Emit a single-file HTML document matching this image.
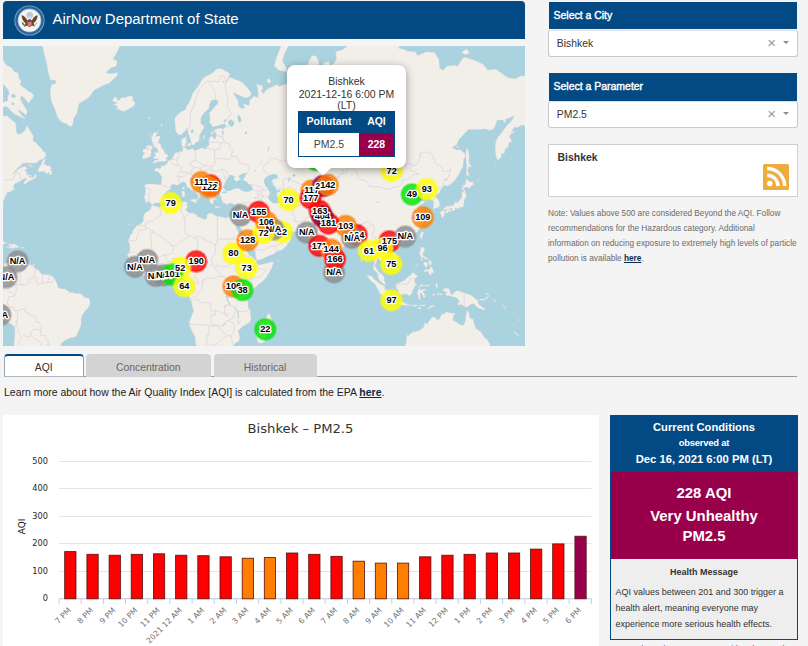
<!DOCTYPE html>
<html lang="en">
<head>
<meta charset="utf-8">
<title>AirNow Department of State</title>
<style>
*{box-sizing:border-box;margin:0;padding:0}
html,body{width:808px;height:646px;overflow:hidden;background:#f4f4f4;font-family:"Liberation Sans",Arial,sans-serif;color:#333}
.abs{position:absolute}
#hdr{left:3px;top:1px;width:522px;height:38px;background:#034a84;border-radius:4px 4px 0 0}
#hdr .t{position:absolute;left:49.5px;top:8px;font-size:14.96px;color:#fff;white-space:nowrap;line-height:20px}
#map{left:3px;top:46px;width:522px;height:300px;background:#aad3df;overflow:hidden}
.ml{font:bold 9.2px "Liberation Sans",Arial,sans-serif;text-anchor:middle;fill:#000;stroke:#fff;stroke-width:2.7px;paint-order:stroke;stroke-linejoin:round}
.bar{left:548.5px;width:248.5px;height:27.5px;background:#034a84;color:#fff;font-size:10.47px;font-weight:normal;-webkit-text-stroke:.4px #fff;line-height:27px;padding-left:5px;white-space:nowrap}
.sel{left:548.3px;width:249.4px;height:26.6px;background:#fff;border:1px solid #c9c9c9;border-top-color:#dcdcdc;border-radius:3px;font-size:10.4px;line-height:26px;padding-left:7.5px;color:#333;white-space:nowrap}
.sel .x{position:absolute;right:20.8px;top:-1.2px;font-size:15px;color:#9a9a9a}
.sel .a{position:absolute;right:8.2px;top:10px;width:0;height:0;border-left:3.4px solid transparent;border-right:3.4px solid transparent;border-top:3.4px solid #8a8a8a}
#info{left:548px;top:143.5px;width:249.5px;height:53.5px;background:#fff;border:1px solid #cfcfcf}
#info b{position:absolute;left:8.5px;top:6.5px;font-size:10.47px;line-height:13px;color:#333}
#note{left:548px;top:205.5px;width:258px;font-size:8.24px;line-height:15px;color:#6a6a6a;white-space:nowrap}
#note b,#learn b{color:#0a2a4a;text-decoration:underline}
.tab{top:354px;height:22.5px;border-radius:4px 4px 0 0;font-size:10.4px;line-height:28px;text-align:center;color:#666;background:#d3d3d3;white-space:nowrap}
#learn{left:4px;top:386px;font-size:10.47px;line-height:14px;color:#222;white-space:nowrap}
#chart{left:3px;top:415px;width:596px;height:231px;background:#fff}
.yl{font:8.2px "DejaVu Sans","Liberation Sans",sans-serif;text-anchor:end;fill:#262626}
.xl{font:7.8px "DejaVu Sans","Liberation Sans",sans-serif;text-anchor:end;fill:#727272}
#cc{left:610px;top:415px;width:188px;height:224.5px;border:1px solid #034a84;background:#eee}
#cc .h{position:absolute;left:0;top:0;width:186px;height:56px;background:#034a84;color:#fff;text-align:center;font-weight:bold}
#cc .v{position:absolute;left:0;top:56px;width:186px;height:86.5px;background:#99004c;color:#fff;text-align:center;font-weight:bold;font-size:14.9px}
#cc .ln{position:absolute;left:0;width:186px;white-space:nowrap}
</style>
</head>
<body>
<div id="hdr" class="abs">
<svg class="abs" style="left:11.1px;top:3.7px" width="31" height="31" viewBox="0 0 31 31">
<circle cx="15.5" cy="15.5" r="15.1" fill="#7fa9b3"/>
<circle cx="15.5" cy="15.5" r="14.2" fill="#2f63a0"/>
<circle cx="15.5" cy="15.5" r="11.9" fill="#7ea3c4"/>
<circle cx="15.5" cy="15.5" r="11.2" fill="#f4f4f2"/>
<circle cx="15.7" cy="10.2" r="3.3" fill="#b9c9d8"/>
<path d="M7.6 10.300c1.700.200 3.200 1.300 4.200 2.800l1.600 2.300 2.200-2 2.200 2 1.600-2.300c1-1.500 2.500-2.600 4.200-2.800-.1 3.400-1.500 6.300-4 7.800l1.200 3.400-2.700-.9-2.500 1.700-2.500-1.700-2.700.9 1.200-3.400c-2.500-1.500-3.900-4.400-4-7.800Z" fill="#6b4423"/>
<path d="M13.600 15.400h4v3.700c0 1.400-1 2.300-2 2.700-1-.4-2-1.300-2-2.700Z" fill="#e07a7a"/>
<path d="M13.600 15.400h4v1.500h-4Z" fill="#2d4f86"/>
<path d="M14.500 12.600l1.100-1.600 1.100 1.600-.6 1.600h-1Z" fill="#efe6d8"/>
<path d="M8.300 17.500c.6 1.700 1.700 2.900 3.300 3.600" stroke="#4f7a3a" stroke-width="1.500" fill="none"/>
<path d="M22.700 17.500c-.5 1.500-1.500 2.700-3 3.500" stroke="#9a8f7a" stroke-width="1" fill="none"/>
</svg>
<div class="t">AirNow Department of State</div>
</div>

<div id="map" class="abs">
<svg class="abs" style="left:0;top:0" width="522" height="300" viewBox="0 0 522 300">
<path d="M148.6 159.5L149.9 159.3L154.8 160.8L156.9 161.3L159.1 159.8L161.4 159.0L164.0 157.7L167.6 156.9L171.8 156.9L175.0 156.3L177.8 156.6L180.4 155.8L182.1 155.5L183.1 156.6L184.6 156.3L184.2 157.9L183.5 159.5L184.6 161.1L182.9 163.4L182.7 164.4L184.8 165.5L185.7 166.5L187.8 167.2L189.3 167.0L192.1 168.0L193.8 168.5L194.2 170.5L196.3 171.3L198.4 172.0L201.2 173.5L202.9 173.2L203.8 171.8L203.8 169.3L205.0 167.7L207.4 167.0L210.1 167.7L210.6 168.8L212.3 169.3L214.4 170.3L217.6 170.5L219.7 171.3L222.9 172.3L224.8 171.3L227.2 170.5L229.3 170.8L229.9 171.3L230.4 174.2L230.6 175.5L231.8 178.6L233.1 180.8L234.4 183.9L235.7 186.7L236.7 188.8L237.2 190.9L239.7 193.2L240.4 195.5L240.4 198.7L240.8 200.7L243.1 202.2L244.6 206.7L245.3 207.6L246.3 208.9L248.4 210.0L250.6 212.2L252.3 213.7L253.3 214.6L253.1 216.3L253.8 217.0L254.8 218.7L257.0 218.7L260.2 218.1L263.3 217.2L265.5 217.0L268.7 215.7L270.4 215.9L269.9 218.7L269.3 220.9L267.6 224.1L265.9 227.3L263.3 231.6L260.2 234.8L257.6 236.9L254.8 239.1L251.6 242.1L249.5 244.8L248.2 246.1L246.7 246.9L245.7 249.7L244.6 251.4L243.8 254.4L244.8 255.7L245.3 258.3L244.8 260.2L245.9 262.6L247.2 263.7L247.6 266.9L247.4 269.1L248.0 272.4L247.8 274.6L246.3 276.4L244.2 277.9L241.0 279.7L239.7 280.2L237.8 282.4L235.5 284.2L235.0 285.8L236.3 288.1L236.7 290.4L236.7 293.4L235.7 295.2L232.5 296.9L231.0 298.3L231.2 300.9L230.6 304.5L227.2 308.2L225.0 311.4L220.8 315.7L216.5 318.2L208.0 318.7L203.8 320.3L200.6 319.0L200.1 314.4L199.1 310.6L196.3 304.8L193.5 300.9L192.1 293.8L192.1 290.8L189.9 286.9L186.7 280.2L186.3 276.8L187.2 273.5L188.9 269.1L190.6 264.8L189.3 260.4L188.4 256.1L187.4 254.0L186.3 250.8L184.6 248.7L182.5 246.5L180.8 244.4L179.9 242.7L181.0 240.6L181.4 239.1L182.1 236.9L182.1 234.8L181.8 232.7L180.1 231.6L179.3 231.4L176.1 231.8L174.0 232.0L171.8 229.5L170.8 227.8L168.4 227.6L165.5 227.8L163.3 228.4L161.2 229.3L159.1 230.1L156.9 231.0L154.8 230.3L152.7 230.1L149.5 230.3L145.2 231.8L142.0 230.5L138.2 227.8L136.7 226.5L134.6 225.2L133.1 223.0L132.9 222.0L132.0 220.9L130.3 218.7L129.3 217.6L127.2 215.9L125.7 214.6L125.4 212.6L125.0 210.2L124.0 209.6L125.0 208.5L126.1 206.7L126.9 203.4L127.2 202.0L126.7 199.3L126.1 199.1L126.3 196.6L124.9 195.9L125.0 194.3L126.5 192.0L127.2 189.3L129.3 186.9L129.7 185.1L130.6 183.4L132.5 181.5L133.7 179.3L136.7 178.4L139.5 176.2L140.6 174.2L140.3 172.7L140.3 170.5L141.4 168.0L143.1 166.0L145.0 165.2L146.7 164.2L147.8 162.1ZM266.1 266.9L268.0 271.3L268.7 274.6L267.2 275.7L267.0 277.9L266.3 280.2L265.0 284.7L263.3 290.4L261.6 295.7L259.1 296.9L257.0 297.3L254.8 296.2L253.8 292.7L253.3 289.2L255.3 285.8L255.7 283.5L254.8 281.3L254.8 277.9L256.5 276.1L259.1 275.3L261.2 273.5L263.3 271.3L264.4 269.1ZM149.3 159.0L147.8 157.7L146.5 155.8L145.5 155.8L144.2 156.3L142.0 156.3L142.5 153.7L141.0 151.5L142.0 148.2L142.7 145.4L142.3 142.5L141.4 139.7L143.5 137.9L146.3 137.9L149.5 137.9L153.1 138.2L156.9 138.8L158.0 137.9L158.6 134.6L158.9 131.9L158.6 130.1L156.9 128.2L156.5 127.0L155.2 126.0L152.0 125.1L151.2 123.2L153.8 121.9L156.9 122.5L158.0 122.2L157.8 119.3L158.6 119.9L161.6 119.6L163.3 118.3L164.6 117.0L164.6 115.0L166.5 114.3L168.0 113.6L168.9 112.9L169.7 111.2L171.0 109.5L171.4 107.7L172.9 106.6L176.1 106.3L176.5 105.6L178.2 105.2L179.3 105.6L179.9 104.5L179.7 103.0L179.5 100.8L178.6 98.6L178.4 94.8L178.6 92.9L181.4 92.1L183.5 90.1L183.5 92.9L182.9 94.8L184.4 95.6L182.9 97.5L182.1 99.7L181.4 101.2L182.5 102.3L184.6 102.7L184.2 104.1L186.7 103.4L189.9 102.3L191.4 104.5L195.2 103.4L199.5 101.2L200.8 102.7L202.7 102.7L203.8 100.8L205.9 99.4L205.9 96.7L205.9 93.6L207.0 90.9L209.3 90.1L210.6 92.1L212.3 92.9L213.1 89.7L213.3 87.3L211.2 86.1L211.2 84.0L214.0 82.7L216.5 82.3L220.8 82.7L222.9 80.6L225.5 81.1L222.9 79.3L221.8 78.1L218.7 78.5L214.4 79.8L210.1 81.1L208.4 78.9L206.7 76.3L207.0 71.8L206.3 67.2L209.1 63.9L212.3 60.0L215.0 57.5L215.0 55.0L212.7 53.4L208.4 54.5L206.5 58.5L205.9 62.5L201.6 66.3L199.1 69.6L198.0 71.8L197.8 76.3L197.8 77.6L200.6 79.8L201.2 82.3L199.7 83.6L198.4 86.1L196.7 88.9L196.3 92.9L195.2 95.9L192.7 96.3L191.6 98.6L188.9 99.0L188.2 96.7L187.8 94.8L186.7 90.9L185.0 86.9L185.0 84.8L184.0 83.6L183.8 81.1L182.9 84.8L181.4 85.6L179.3 88.1L177.2 88.9L175.0 88.5L173.1 85.6L172.3 82.7L172.3 78.9L171.8 76.3L171.8 71.8L174.0 69.6L176.1 67.2L179.3 64.9L182.5 63.4L183.5 60.0L185.7 57.5L187.8 52.4L189.9 47.1L192.1 44.3L194.2 41.5L196.3 38.6L198.4 34.5L201.6 30.8L205.9 29.0L210.1 26.5L213.3 23.2L216.1 22.6L219.7 23.2L221.8 24.5L225.0 26.5L227.2 27.7L225.0 30.8L228.2 31.5L231.4 33.3L235.7 34.5L239.9 36.9L244.2 41.5L248.4 47.1L247.4 50.3L243.1 51.9L237.8 50.3L233.6 48.1L230.4 46.5L232.5 50.8L235.3 55.0L235.3 60.0L238.9 62.5L241.6 61.5L239.9 57.5L243.1 58.5L246.3 59.5L246.3 55.0L250.6 50.3L254.8 51.3L255.3 47.1L254.4 41.5L253.3 38.0L259.1 39.8L260.2 42.6L258.0 44.3L260.2 47.6L263.3 43.7L267.6 41.5L274.0 38.6L276.1 40.4L282.5 38.0L286.8 35.7L289.9 30.8L291.0 35.7L297.4 34.5L301.6 35.7L303.8 36.9L307.0 39.8L308.0 36.3L304.8 32.1L303.4 26.5L303.8 19.9L307.0 13.0L309.1 9.4L313.4 10.2L316.1 16.5L315.5 23.2L316.1 29.6L315.5 35.7L317.6 41.5L316.5 47.1L314.4 50.8L317.6 48.1L319.7 42.6L318.7 35.7L317.6 29.6L318.7 23.2L320.8 16.5L326.1 15.1L327.2 19.9L331.4 16.5L333.6 13.0L332.5 5.8L340.0 3.5L346.3 -2.0L346.3 -6.8L352.7 -11.0L361.2 -15.4L369.7 -17.2L374.0 -19.0L383.2 -30.4L386.8 -27.5L388.9 -21.8L397.4 -20.8L402.7 -14.5L401.7 -6.0L395.3 2.0L401.7 3.5L403.8 5.0L412.3 5.8L414.4 9.4L424.0 5.8L431.5 6.5L435.7 13.0L436.8 21.9L440.0 24.5L444.2 19.9L450.6 19.2L454.9 19.9L459.1 13.0L461.2 10.9L471.9 14.4L480.4 18.6L484.7 23.9L493.2 23.2L501.7 29.6L505.9 32.1L512.3 32.7L518.7 29.6L523.4 30.2L524.0 35.7L527.2 29.6L533.6 30.8L544.2 35.7L544.2 57.5L542.3 70.5L537.9 69.6L532.5 72.8L528.3 76.3L524.0 80.6L518.7 78.9L514.4 81.5L511.3 81.1L509.1 84.8L508.1 88.9L505.9 89.7L508.1 93.6L508.7 95.9L505.9 96.7L505.5 100.5L501.7 104.1L501.7 107.0L498.5 107.7L498.1 111.2L494.7 114.6L493.2 111.2L492.1 104.1L492.5 96.7L494.9 90.9L498.5 86.9L501.3 82.7L504.9 78.5L509.1 74.1L511.3 69.6L507.0 71.8L502.7 73.2L502.3 77.2L499.6 74.1L494.2 74.1L491.0 82.7L486.8 84.4L482.1 82.7L477.2 83.6L470.8 83.6L465.5 83.6L460.2 88.9L455.9 93.6L453.8 98.6L449.1 101.6L453.8 104.1L457.0 103.4L459.8 105.9L461.9 107.0L462.1 110.5L460.8 112.9L460.2 118.0L459.8 121.2L457.0 126.0L455.3 129.2L452.3 133.7L449.5 136.7L444.6 140.2L442.1 139.1L440.0 140.8L439.3 141.7L437.4 144.0L437.2 145.9L434.6 148.2L432.7 148.7L432.5 150.4L434.6 152.8L436.6 156.3L436.8 159.0L436.1 161.1L433.6 161.9L430.4 163.2L430.2 160.3L430.6 157.7L430.6 155.0L428.3 154.2L427.2 153.7L427.8 150.9L426.8 149.0L425.7 148.2L422.9 149.3L420.0 151.2L419.3 149.6L420.8 146.5L418.7 145.9L415.7 148.5L412.3 150.4L411.7 151.5L413.4 153.7L414.4 155.5L416.6 155.0L418.3 154.2L419.8 155.0L422.1 155.5L421.7 156.6L418.0 158.5L417.2 159.0L415.1 161.6L415.5 162.4L417.2 164.2L418.5 167.2L420.4 169.8L420.4 172.0L418.3 173.2L419.8 174.2L420.8 174.7L420.0 177.2L418.7 179.1L416.6 182.0L415.7 183.9L414.4 185.8L412.7 187.4L410.2 189.7L409.5 190.2L405.9 191.6L404.2 192.5L402.7 192.7L400.6 193.6L397.4 194.3L396.1 195.0L396.3 197.1L394.9 196.6L394.6 194.3L392.1 193.9L391.0 194.3L388.9 195.5L387.8 197.3L386.3 200.0L387.4 202.2L388.9 204.5L390.6 206.0L391.4 206.5L393.2 208.9L393.6 212.2L393.8 214.4L393.2 216.6L391.0 218.1L388.9 218.9L388.3 220.2L386.3 222.0L384.6 222.8L384.2 220.9L384.6 219.8L383.6 218.9L381.7 218.7L380.4 216.6L379.3 215.0L377.2 214.2L375.9 214.0L375.9 212.4L374.0 212.6L373.9 214.4L373.6 215.9L372.9 217.6L372.3 218.7L372.5 221.3L374.0 223.0L375.3 225.8L377.2 226.7L378.7 228.0L380.6 229.9L381.2 232.7L381.4 235.2L382.5 236.9L383.2 238.2L381.4 238.4L379.3 236.9L377.0 235.0L375.5 232.7L374.9 229.9L374.6 227.6L372.9 225.6L371.0 224.1L370.4 224.1L370.4 222.0L370.8 219.8L370.8 217.6L371.2 215.5L370.2 212.2L370.0 210.9L369.1 207.8L368.9 205.6L367.6 204.5L365.9 205.6L364.0 207.1L361.9 206.7L362.3 203.4L361.9 201.1L360.8 198.9L359.1 197.5L357.6 195.5L357.0 194.6L356.6 192.5L354.8 191.8L353.8 193.2L351.7 193.6L349.5 194.1L348.5 193.6L346.8 194.6L346.1 195.9L345.3 197.7L343.8 198.2L342.1 199.3L340.2 201.6L338.5 202.9L336.3 205.1L334.0 206.7L332.1 207.8L331.7 210.0L332.1 213.1L331.2 215.5L331.1 218.1L330.0 219.2L329.3 221.3L327.6 222.4L326.1 223.9L324.8 223.0L323.6 220.0L322.5 217.1L320.5 213.5L318.9 209.3L318.2 207.8L317.2 204.5L316.2 200.0L315.9 197.7L316.1 195.0L315.5 192.7L314.6 194.8L312.3 196.2L310.2 195.5L308.0 192.5L310.2 191.8L308.0 191.1L307.0 189.7L304.8 188.8L303.8 186.7L302.9 185.5L298.5 185.8L293.8 186.0L292.1 186.0L290.2 185.5L286.8 185.3L284.2 184.6L282.5 182.0L281.0 181.3L278.2 182.4L276.1 182.4L273.1 180.3L270.8 179.3L269.3 176.9L268.0 174.2L265.5 173.2L264.6 174.2L263.3 175.5L264.4 177.9L265.0 179.8L266.7 181.5L268.0 182.9L268.2 184.8L269.3 186.7L269.7 186.2L269.7 183.9L270.4 183.6L271.0 185.5L270.8 187.2L271.0 188.1L272.9 188.1L275.0 188.3L277.0 187.4L278.9 185.5L280.4 183.9L281.2 183.2L281.2 186.2L282.1 187.9L284.6 189.3L285.9 189.5L288.5 192.0L286.8 195.5L285.7 196.8L284.2 197.7L284.0 200.0L282.5 200.5L281.0 202.5L278.2 204.5L276.3 204.5L274.0 205.4L272.3 206.7L269.7 208.5L265.7 210.0L263.3 211.1L260.2 212.4L257.0 213.7L254.6 214.2L253.6 214.0L253.1 212.6L252.5 209.3L252.1 206.7L251.6 204.7L249.5 201.8L248.4 199.8L246.3 197.1L244.6 194.3L244.0 192.0L242.1 188.3L240.4 186.2L238.9 183.9L236.7 180.3L235.7 178.9L234.8 178.9L235.6 175.5L234.4 179.1L234.1 179.7L232.7 178.4L231.4 176.7L230.6 174.5L230.1 171.3L233.1 171.5L234.4 170.5L235.3 169.0L235.7 167.2L236.7 164.4L237.4 162.6L237.4 160.3L237.8 159.0L238.2 157.4L236.7 157.4L234.8 156.9L232.5 158.7L229.3 157.7L226.5 156.7L226.1 158.2L224.0 158.5L221.4 157.1L219.5 156.3L219.1 154.5L218.0 152.8L218.7 152.3L218.2 150.9L218.0 150.1L217.0 149.6L217.0 148.2L216.5 146.5L216.3 145.8L213.1 145.5L212.3 147.1L213.1 147.8L211.6 148.2L211.0 148.2L209.9 146.5L209.3 148.2L210.1 150.1L210.8 151.2L212.3 153.7L212.3 154.6L211.4 153.8L210.1 153.9L210.6 155.5L210.4 157.7L209.1 157.9L207.4 156.9L206.5 154.5L207.4 152.8L206.1 152.6L205.2 151.2L203.8 149.0L202.5 147.1L202.6 144.5L202.5 142.8L200.6 141.4L199.7 140.7L196.1 138.2L193.5 136.4L192.9 133.7L191.8 132.8L190.8 134.3L190.1 132.2L190.6 131.8L188.9 131.9L187.4 132.5L187.4 134.3L187.4 136.1L188.0 136.6L189.9 137.9L191.4 141.1L193.3 142.8L195.2 142.8L195.0 143.7L197.2 145.1L199.5 146.4L200.6 147.9L200.4 148.7L199.3 147.6L197.8 146.8L196.5 148.2L196.3 149.0L197.6 150.7L196.3 151.8L195.9 153.1L194.6 153.8L194.5 153.1L195.2 151.8L195.2 150.1L194.6 148.2L193.1 147.6L192.7 146.5L191.5 145.8L190.4 144.7L188.0 144.1L187.2 143.1L186.3 142.3L184.8 141.4L183.5 139.9L183.1 138.2L182.7 136.7L182.1 136.4L180.1 135.5L178.6 136.7L177.2 137.3L176.1 138.2L174.4 139.4L172.7 138.8L171.2 138.5L169.7 138.2L168.6 138.8L167.8 139.9L167.8 141.4L168.0 142.8L165.9 144.3L163.8 145.1L162.9 146.2L161.2 148.5L160.6 149.7L161.6 151.6L160.1 152.8L159.7 154.7L157.2 156.6L155.9 156.9L153.8 157.1L151.8 157.1L149.9 158.6ZM149.1 117.8L152.3 116.8L153.8 116.6L154.8 115.6L156.9 116.0L158.9 115.5L161.6 115.5L163.3 115.0L164.2 114.1L164.2 113.3L162.3 112.9L163.3 111.9L164.6 110.9L164.9 109.5L164.0 108.1L162.1 107.9L161.8 105.9L161.0 105.6L160.8 103.8L158.6 101.9L158.0 100.5L157.8 98.2L156.9 97.5L155.9 96.7L154.4 96.7L155.5 95.6L155.9 94.4L156.7 92.3L157.4 90.9L156.9 90.1L154.2 90.1L152.5 90.9L152.9 89.3L154.6 87.3L154.7 86.3L150.6 86.5L149.9 88.9L148.9 90.9L149.1 93.2L148.0 94.0L149.5 95.2L149.3 99.4L150.6 97.8L150.8 97.1L151.2 98.6L150.3 100.8L151.8 101.6L153.5 100.8L153.5 102.3L154.4 103.8L155.2 103.8L154.8 105.2L154.6 106.3L154.0 106.6L151.4 106.3L152.0 107.4L151.2 108.4L152.5 108.4L152.7 109.5L151.2 110.9L149.9 111.6L150.3 112.4L152.0 112.6L152.9 112.6L154.4 113.3L155.5 112.6L154.8 113.9L152.3 113.9L151.6 114.6L150.6 116.3ZM147.7 110.5L148.0 107.7L148.2 106.5L148.0 104.1L149.5 102.7L149.3 101.6L148.4 99.7L145.7 99.2L143.5 100.1L142.7 101.6L143.8 102.3L142.9 103.0L139.9 103.0L139.9 105.9L142.0 107.0L141.0 108.1L140.1 109.5L139.1 110.9L139.5 112.2L140.3 113.1L143.1 112.2L146.3 110.9ZM112.9 63.4L114.4 62.0L114.4 60.0L110.1 58.5L114.4 57.0L109.1 55.0L112.3 50.3L115.4 55.0L118.0 51.9L122.3 51.6L126.5 49.8L129.9 50.8L129.7 54.0L132.3 57.0L130.3 60.5L128.9 61.2L125.0 63.4L120.8 65.4L118.0 64.9L116.1 63.2ZM5.9 -35.5L15.4 -15.4L19.7 -13.6L33.5 -13.6L36.7 -10.2L39.9 2.0L42.0 10.9L44.2 19.9L45.2 26.5L47.4 33.9L52.7 34.5L52.7 37.5L48.4 38.6L47.1 47.1L48.4 55.5L51.2 61.5L54.8 71.8L58.6 76.3L63.3 77.6L67.6 81.1L69.7 78.5L70.8 71.8L74.0 67.2L76.1 57.5L81.2 54.5L86.7 50.8L91.0 44.3L99.5 39.8L105.9 37.5L114.4 29.6L114.4 26.5L108.0 27.7L102.7 26.5L108.0 21.9L113.3 19.9L114.4 15.1L110.1 13.0L114.4 5.8L117.6 -2.0L120.8 -10.2L119.7 -14.5L121.8 -21.8L122.9 -55.8L5.9 -55.8ZM-13.3 164.2L-1.6 162.1L0.5 161.1L-0.5 156.6L1.2 153.7L1.4 151.5L1.8 150.9L3.5 148.7L3.7 146.8L8.0 145.4L9.3 144.0L12.2 143.4L11.8 142.4L10.8 142.7L10.3 141.4L10.8 139.4L11.8 137.8L14.4 136.7L16.1 135.8L18.6 134.3L20.8 133.1L23.3 131.9L23.9 132.8L20.5 136.7L21.6 138.5L25.9 134.9L31.4 132.8L33.5 131.0L32.7 127.6L30.3 131.6L27.1 131.3L25.0 130.1L23.1 127.3L23.9 125.1L20.8 124.5L24.4 122.9L24.6 121.9L21.8 120.4L19.3 120.9L17.6 121.7L15.4 123.0L13.3 124.9L11.2 127.6L9.7 128.2L10.5 127.0L11.8 125.7L12.9 124.0L14.4 122.2L16.2 120.6L18.0 120.1L19.0 118.0L19.9 117.3L25.0 117.0L29.7 117.3L33.5 117.0L36.7 113.9L39.7 113.3L42.7 110.5L42.9 107.0L39.9 105.2L39.3 103.4L35.6 99.7L33.5 97.1L29.9 94.6L30.3 89.7L28.2 86.5L25.0 81.1L24.2 79.3L21.8 84.8L18.6 87.3L15.6 88.5L13.1 85.6L13.3 80.6L12.2 76.3L9.0 74.5L4.4 70.0L-0.5 70.0L-5.0 70.0L-13.3 71.8ZM23.9 118.3L27.1 118.6L29.9 120.9L28.2 120.9L25.0 119.0ZM24.2 128.9L25.0 127.6L27.1 129.5L29.3 129.3L28.2 130.7L26.1 130.1ZM35.0 125.7L35.2 122.9L37.8 119.3L39.3 115.6L40.3 113.9L43.1 112.6L42.2 114.6L41.0 117.3L40.3 118.6L42.5 118.0L43.1 119.6L46.3 119.6L47.4 120.6L48.4 122.5L46.7 124.1L48.4 124.1L49.1 125.9L48.2 128.7L47.1 128.7L45.9 128.1L46.3 125.4L44.2 127.6L42.2 127.9L42.7 126.0L42.0 125.7L38.8 125.7ZM-13.3 4.2L-4.8 11.6L-0.5 13.7L3.7 19.2L9.0 21.9L11.2 25.8L15.2 27.1L15.9 32.1L18.2 35.7L16.9 38.6L19.7 40.9L23.3 43.2L25.4 45.4L28.2 46.5L30.8 49.2L29.5 52.4L27.3 54.5L25.9 57.5L23.3 54.5L21.2 51.9L18.0 49.8L17.6 54.0L19.5 57.5L21.6 60.5L23.1 63.0L24.4 65.4L23.7 67.7L23.1 69.6L21.2 67.7L18.2 65.4L15.2 63.7L16.1 65.8L19.0 69.6L21.6 71.8L22.9 73.2L20.8 72.3L17.6 70.9L14.4 69.6L12.2 68.4L9.0 66.3L6.9 63.4L3.7 60.5L-0.5 61.0L-4.8 60.0L-5.8 57.5L-3.3 55.5L-0.1 56.0L2.7 55.5L4.6 55.0L4.8 50.8L6.1 47.6L5.2 43.7L2.7 40.9L0.5 38.6L-2.7 34.5L-6.5 29.6L-13.3 26.5ZM-13.3 223.0L-3.3 222.6L-2.2 224.1L0.3 220.9L0.5 218.9L2.0 217.6L3.3 217.0L5.9 216.6L8.6 214.5L9.5 215.9L8.2 217.6L8.8 218.3L10.1 217.6L11.8 216.6L12.2 215.0L12.7 216.6L15.6 217.6L16.5 218.7L18.8 218.5L20.5 218.5L22.5 219.6L23.5 219.4L24.6 218.7L29.3 218.3L27.6 218.7L28.6 219.8L31.4 220.9L31.8 222.8L33.5 223.0L35.6 224.1L37.4 226.7L39.9 228.4L43.7 228.6L46.3 228.8L49.9 230.8L51.4 232.0L52.7 234.8L53.7 236.9L54.8 239.1L54.8 241.2L58.0 242.7L59.1 242.7L61.2 242.7L64.4 244.4L66.9 246.5L69.7 246.3L72.2 247.4L76.1 247.3L79.3 249.1L81.8 251.4L84.6 252.1L86.1 252.3L86.7 255.1L87.1 256.3L86.9 258.4L85.2 261.9L83.5 263.7L82.4 264.6L81.4 266.5L79.3 269.1L78.2 273.1L78.2 276.8L77.8 279.9L76.7 282.4L75.4 285.3L74.0 289.2L71.8 291.5L69.3 291.5L66.5 292.0L64.6 293.4L62.7 293.8L59.5 296.2L58.0 298.1L57.8 300.7L58.0 302.3L57.4 304.5L50.5 315.7L9.0 315.7L10.1 303.3L11.0 299.2L11.4 292.9L12.0 285.1L11.6 281.0L9.5 279.3L8.0 277.9L3.7 275.7L1.2 274.2L-1.0 270.9L-3.1 266.9L-13.3 258.3ZM2.7 201.4L5.0 201.8L7.3 201.8L8.6 202.9L12.2 201.4L15.6 201.8L15.8 200.9L13.9 199.6L12.2 198.4L10.1 198.0L8.6 198.2L6.5 198.0L5.0 198.2L6.3 199.3L7.1 200.9L4.8 201.0ZM3.5 197.2L1.6 198.0L-4.1 198.1L-3.1 196.4L-5.8 194.3L-13.3 193.2L-13.3 190.9L-2.7 193.6L0.1 195.2L1.6 196.2ZM18.2 202.2L18.2 201.1L21.6 201.4L21.4 202.2ZM29.5 219.7L31.4 219.6L31.6 218.1L29.9 218.3ZM331.1 220.2L333.1 222.0L334.0 222.8L335.4 225.2L335.1 227.3L333.8 228.2L332.5 228.5L331.9 228.3L331.1 226.5L331.0 224.1L331.2 222.0ZM439.8 164.2L441.0 162.6L443.4 160.6L444.9 160.0L446.8 160.2L448.9 159.6L450.0 160.3L450.8 158.5L452.1 156.6L452.2 155.3L453.4 155.0L452.7 156.2L453.2 156.9L455.3 155.8L457.0 153.8L458.1 152.3L458.7 150.9L459.1 149.0L458.8 148.2L459.1 146.5L459.8 144.8L460.8 145.8L461.2 144.1L462.3 144.3L462.3 146.8L463.4 149.3L462.5 152.8L461.2 152.8L461.2 156.3L460.4 158.2L460.9 159.8L460.0 161.2L458.9 161.9L458.7 160.3L458.5 161.2L457.3 161.1L457.2 161.9L456.7 162.6L456.5 161.3L455.5 162.5L452.7 162.6L452.5 161.5L451.9 162.6L452.5 163.4L451.0 164.2L450.2 165.6L448.7 164.4L448.8 163.5L449.3 162.5L447.8 162.3L446.1 162.9L443.2 163.4L441.7 164.2ZM439.8 164.4L441.5 165.2L441.9 166.7L441.0 169.5L440.2 171.1L439.3 171.8L438.3 171.1L438.3 169.3L437.8 167.7L437.4 167.7L437.0 166.2L437.6 165.5L438.7 165.2ZM442.1 165.8L443.8 164.1L446.4 163.3L447.6 163.7L447.8 164.7L446.8 166.1L445.3 165.5L444.2 167.4L443.2 166.7ZM459.1 144.0L458.7 142.0L459.8 140.2L460.2 138.8L461.2 139.1L462.1 138.8L462.6 135.8L463.0 133.7L462.7 132.4L465.3 134.6L467.2 136.1L470.4 135.7L470.2 137.9L471.5 138.6L468.5 139.8L466.1 142.5L463.4 141.1L461.2 141.7L459.8 141.1L460.6 142.3L461.7 143.1L460.6 143.3ZM463.4 103.0L464.9 102.7L465.9 107.7L466.1 109.5L465.9 114.6L466.6 118.0L469.1 121.2L465.5 120.6L464.9 124.5L465.5 127.6L466.6 128.2L466.4 130.7L464.9 128.5L463.4 130.7L463.2 127.6L463.6 124.5L463.4 121.2L463.6 118.0L462.7 112.2L463.0 106.6ZM420.0 185.5L420.6 186.2L420.0 188.6L419.0 191.5L418.4 193.4L417.2 191.8L416.8 189.7L417.8 187.4L418.7 186.1ZM392.5 199.6L394.2 201.8L396.1 200.7L397.4 198.7L396.6 197.5L394.2 198.0ZM417.8 201.1L421.2 201.4L421.7 204.5L420.0 206.9L420.2 210.0L421.9 210.7L423.6 211.3L425.3 214.2L423.6 213.5L422.1 212.4L420.2 211.5L418.7 211.8L417.8 210.4L417.2 209.3L416.2 206.3L417.2 205.6L417.4 203.1ZM428.1 220.2L430.0 223.0L430.6 225.6L429.8 227.8L428.7 226.3L428.1 229.3L425.5 228.0L425.5 225.6L423.8 225.2L421.0 226.5L421.0 224.6L422.7 223.7L423.6 222.8L424.6 223.9L426.6 222.8L427.2 222.0ZM425.7 214.4L427.8 214.4L428.7 217.2L427.6 219.8L426.8 219.6L425.9 217.9L425.9 216.6ZM420.8 215.7L423.4 216.6L425.1 217.2L424.2 219.8L423.6 221.8L422.1 221.1L421.7 218.9L420.6 218.7ZM410.6 223.3L413.6 220.2L415.5 218.1L415.7 216.8L415.1 217.6L412.3 221.3ZM417.2 212.2L419.1 212.4L419.8 214.2L419.1 215.0L418.0 213.5ZM394.4 236.9L395.9 237.6L398.0 235.9L399.5 235.0L401.7 234.4L403.8 231.8L405.9 230.5L407.0 229.5L408.3 228.4L409.8 226.5L410.6 226.5L411.7 228.0L412.5 228.7L414.9 230.1L413.6 231.6L412.1 232.3L411.5 234.2L411.9 236.9L414.2 239.1L412.1 239.5L411.2 241.2L411.2 242.3L409.8 244.0L409.1 246.5L408.5 248.7L405.9 249.7L405.1 249.9L404.9 248.4L401.7 248.0L399.1 248.7L395.7 247.4L395.3 244.4L393.6 242.7L393.2 240.6L393.2 238.6ZM363.8 229.3L368.7 230.1L370.4 232.3L371.2 233.2L373.8 235.0L375.7 236.9L377.2 237.6L379.3 239.1L381.2 240.1L382.1 241.2L381.4 243.3L383.4 243.5L384.4 246.1L386.8 247.6L386.6 250.1L386.3 253.6L385.1 253.6L383.8 253.8L382.3 252.3L378.9 249.5L376.1 246.5L374.7 243.2L373.4 240.8L371.4 237.6L369.1 235.9L365.7 232.5ZM385.1 255.7L386.8 253.8L388.5 254.2L391.7 254.6L392.3 255.6L396.1 256.0L397.2 254.8L398.5 255.4L400.8 255.9L401.0 256.6L402.7 257.6L404.6 257.8L404.6 259.8L401.0 259.1L397.4 258.8L393.2 257.6L390.4 257.6L387.8 257.0ZM404.7 258.5L406.3 258.4L407.4 259.1L406.3 260.0ZM407.8 259.1L408.9 258.7L409.5 259.6L408.9 260.2L407.8 260.0ZM409.8 259.4L411.5 258.5L412.9 258.9L414.6 259.1L414.4 260.0L412.3 260.2L410.0 260.4ZM416.1 259.1L418.7 258.9L422.5 258.5L422.9 259.1L420.8 260.0L417.6 260.0L416.1 260.0ZM414.4 261.5L416.6 261.1L418.3 262.6L416.6 263.2L414.9 262.2ZM424.0 263.2L426.1 260.9L428.3 259.6L431.5 259.0L432.1 259.2L430.4 260.4L427.2 261.9L425.1 263.2ZM426.9 238.0L427.6 237.8L426.1 240.1L425.1 240.5L422.9 240.1L419.8 240.1L417.6 240.1L417.0 241.2L416.8 242.9L418.2 244.2L420.0 243.0L423.8 243.0L422.5 243.8L420.4 245.0L419.5 245.5L421.5 247.6L421.9 249.7L422.5 251.2L420.8 251.4L419.8 249.9L418.7 246.9L417.0 247.6L417.4 249.7L417.4 253.1L415.5 253.1L415.3 252.2L415.7 249.7L414.2 248.7L414.2 246.9L415.5 243.3L416.2 243.1L416.1 240.8L417.2 239.3L418.3 238.4L419.8 238.9L422.7 239.2L425.7 239.1ZM432.5 239.1L433.4 236.7L435.1 238.0L433.6 239.1L435.1 240.1L434.0 240.6L434.4 242.9L433.4 242.1L432.9 240.6ZM433.6 247.8L436.8 247.2L439.5 248.0L439.5 249.3L436.8 248.4L434.0 248.7ZM429.3 248.0L431.5 247.8L431.9 248.9L430.4 249.4L429.3 248.9ZM440.0 242.9L443.2 242.1L446.4 242.9L447.0 245.5L447.4 248.2L449.5 248.4L451.7 245.9L454.4 244.4L457.0 245.5L460.6 246.5L461.9 246.9L466.8 248.8L468.7 249.4L471.5 252.3L474.0 254.0L475.7 254.6L475.8 255.5L474.0 255.6L476.1 258.3L476.8 259.6L478.9 260.4L480.4 261.9L482.3 263.1L481.3 264.1L478.3 263.2L474.3 261.5L471.9 258.7L469.3 257.6L466.6 258.9L465.5 260.6L464.4 260.9L461.2 260.6L458.9 258.5L456.8 259.1L454.9 259.1L454.9 257.0L456.4 255.9L455.1 252.9L452.7 251.6L448.9 250.6L445.7 249.5L443.8 249.9L442.1 247.4L444.9 246.5L442.1 245.9L440.0 244.2ZM476.8 253.1L479.3 252.9L481.5 252.9L483.6 251.6L485.3 250.1L485.1 251.6L483.6 253.1L480.4 254.6L477.2 254.0ZM482.1 246.7L484.7 248.0L486.8 250.8L486.1 250.8L484.2 248.7L482.1 247.4ZM490.2 252.7L492.1 254.2L493.2 255.9L491.9 255.7L490.6 254.0ZM500.4 261.1L502.7 261.3L503.4 262.4L501.3 262.2ZM503.0 259.1L503.8 260.0L504.4 261.7L503.6 261.1ZM498.5 257.4L501.3 259.1L500.8 259.4L498.3 257.8ZM510.2 284.9L513.4 287.2L516.6 289.9L515.5 289.9L512.3 287.8L510.2 285.6ZM515.7 272.8L517.0 273.9L517.0 275.0L515.9 274.6ZM402.1 299.0L403.2 295.9L403.4 291.5L404.0 288.8L405.1 289.9L407.0 288.1L409.5 286.2L413.6 285.3L416.6 284.4L419.8 281.9L421.2 280.2L421.2 277.9L422.7 276.6L424.2 278.8L425.1 276.4L427.2 273.5L429.3 271.3L431.5 271.1L433.8 273.1L433.8 274.2L435.7 273.3L437.0 272.4L437.8 269.8L439.6 267.9L442.1 267.4L443.4 265.4L445.3 266.5L448.5 267.1L452.3 267.4L450.6 269.8L450.4 272.8L449.3 273.5L452.3 275.5L454.9 277.0L458.1 279.3L460.8 279.0L462.3 274.6L462.7 270.2L463.2 268.2L463.6 264.8L464.4 264.1L465.9 266.9L467.2 272.2L470.4 273.5L470.8 276.8L472.5 281.3L473.6 283.0L477.6 285.6L478.7 287.3L480.4 289.9L482.1 292.0L484.4 293.8L485.5 295.9L487.2 298.1L487.0 300.9L487.8 315.7L401.7 315.7ZM283.6 25.8L276.1 24.5L271.2 19.9L272.9 13.0L275.0 7.2L278.2 -0.4L282.5 -10.2L291.0 -14.5L305.9 -23.6L305.9 -17.2L291.0 -8.5L285.7 -0.4L281.4 8.0L279.3 15.1L283.6 21.9ZM264.4 32.7L266.5 32.7L268.0 35.7L265.5 37.5L264.0 35.1ZM286.8 27.1L289.5 29.6L288.9 31.5L286.3 29.6ZM458.7 6.5L463.4 2.7L466.6 7.2L462.3 8.7ZM187.6 153.7L189.7 153.3L194.4 153.0L193.3 155.0L193.8 156.2L193.3 157.3L191.0 156.2L188.0 154.7ZM180.8 144.7L182.1 146.8L181.6 150.4L180.4 150.9L179.1 151.2L179.1 148.2L178.5 146.5L178.6 145.5ZM181.2 139.7L181.5 142.3L180.8 144.3L179.5 142.8L179.5 141.4L181.0 140.5ZM211.2 160.8L212.3 160.3L214.6 160.7L217.2 160.8L217.0 161.6L213.8 161.9L211.2 161.1ZM229.9 161.9L231.2 161.2L232.7 160.7L234.8 159.8L233.3 161.5L233.6 161.7L231.4 162.8L230.1 162.3ZM166.2 149.3L167.8 148.3L168.5 149.0L167.7 150.1ZM210.1 150.9L211.0 150.9L212.7 152.0L213.5 153.7L212.3 152.8L210.8 151.8ZM220.1 158.6L221.2 157.8L221.0 158.7L220.4 159.3ZM216.3 150.4L217.8 150.0L217.6 150.9L216.3 150.8ZM184.8 97.8L188.0 96.5L188.0 98.2L187.2 100.5L185.0 99.7ZM182.1 98.6L184.2 99.0L184.0 100.3L182.5 100.1ZM199.7 91.7L201.2 89.3L202.1 89.1L201.2 91.7L199.9 93.2ZM196.1 95.9L197.6 91.5L197.2 93.6ZM207.6 87.7L209.1 86.3L210.8 86.7L209.9 88.1L208.0 89.1ZM208.2 85.2L209.5 84.6L210.1 85.6L209.1 86.1ZM274.6 214.3L276.1 214.0L277.2 214.3L275.7 214.8ZM145.5 71.4L147.2 70.5L146.9 73.6L145.9 72.8ZM158.0 78.5L159.1 77.6L158.9 81.1L158.0 80.2ZM154.2 84.8L155.5 84.0L155.5 85.6ZM146.3 88.9L148.0 86.9L147.8 88.9L146.1 90.1ZM147.2 91.3L148.0 90.5L148.9 92.1L147.8 92.5ZM125.2 178.4L126.7 177.8L126.1 179.0ZM127.6 179.1L128.4 178.7L128.4 179.6ZM130.8 178.9L131.6 177.4L132.6 176.2L131.6 178.6ZM110.6 208.2L111.4 208.5L111.2 209.1ZM244.6 253.6L245.0 254.0L245.3 254.8L244.7 254.6ZM253.1 265.6L253.8 266.3L253.3 266.7ZM278.9 286.7L279.9 287.2L279.3 287.7ZM283.3 284.7L284.2 285.1L283.6 285.8ZM358.5 212.2L359.1 213.3L358.9 215.5L358.3 216.3L358.3 214.4ZM385.1 244.8L386.8 244.6L388.3 246.7L387.4 247.6L386.1 245.9ZM429.8 166.0L430.6 165.3L431.3 165.7L430.4 166.2ZM436.1 163.4L436.8 162.4L436.5 163.7ZM470.8 137.3L473.0 135.2L472.3 136.1ZM473.8 135.2L477.8 132.2L476.1 134.0ZM491.7 117.6L493.4 115.3L492.7 117.3ZM508.9 86.9L510.8 84.0L511.5 85.6L509.6 87.7ZM453.4 100.5L455.5 99.7L454.9 101.6Z" fill="#f2efe9" stroke="#d9cfd6" stroke-width=".35"/>
<path d="M222.9 144.8L220.8 142.5L220.1 141.1L220.6 139.1L222.1 138.2L222.1 136.1L224.2 133.1L225.5 131.3L226.5 129.2L228.2 128.9L229.3 128.9L230.6 130.4L232.7 130.4L230.4 132.5L232.5 134.9L233.6 135.5L236.5 133.7L238.9 133.4L236.3 132.2L235.7 130.1L237.8 128.5L241.0 127.3L243.1 127.0L244.8 127.0L242.7 128.5L242.1 130.7L241.0 132.5L239.5 133.1L240.6 134.3L241.6 134.6L244.2 136.4L245.7 137.9L248.4 139.7L249.7 142.3L249.7 143.7L246.7 145.4L245.7 145.4L242.9 145.7L239.9 145.0L238.4 144.5L237.8 143.4L235.9 142.5L232.5 142.5L230.1 143.3L228.0 144.5L226.1 145.1ZM218.4 146.9L220.8 147.2L222.9 147.1L224.8 146.1L222.9 145.4L220.8 145.2L219.3 146.2ZM262.3 139.7L260.6 135.2L261.9 132.2L263.3 130.7L266.5 129.2L269.7 127.9L272.9 128.2L274.4 129.2L274.6 132.8L271.9 132.5L269.7 133.7L268.2 134.9L269.5 136.1L270.2 137.9L270.4 139.4L271.9 140.2L273.3 142.5L272.9 143.4L273.8 144.5L276.5 143.1L277.6 145.4L275.0 145.7L273.8 148.2L274.0 150.1L275.9 152.3L275.7 155.5L276.1 156.6L274.0 156.9L271.9 157.4L269.7 157.1L267.6 155.3L265.3 152.6L265.3 150.4L266.3 149.8L266.3 147.6L268.2 147.3L266.7 146.5L265.5 144.5L264.6 142.5ZM8.8 218.3L10.1 219.8L9.7 221.8L8.2 221.5L8.0 219.8ZM228.9 241.8L230.4 240.8L232.5 240.5L233.8 241.0L234.2 242.1L233.6 243.3L233.1 245.5L232.5 246.3L231.2 246.7L229.3 246.7L228.9 245.5L228.7 243.3ZM223.6 248.4L224.6 250.8L224.4 252.3L225.0 254.0L226.3 256.1L227.2 258.3L227.6 259.8L226.3 259.4L225.5 256.8L224.0 254.6L223.3 251.9L223.1 249.7ZM233.6 261.5L234.8 264.8L235.5 268.0L236.1 271.7L235.0 272.0L234.4 268.0L233.8 264.8L233.3 261.7ZM237.8 231.6L238.4 232.7L239.3 235.2L238.4 235.9L237.8 234.2ZM226.1 238.9L228.0 236.5L227.8 237.6L227.0 238.9ZM191.0 212.4L192.3 212.2L192.3 213.7L191.0 213.7ZM381.9 112.6L383.6 113.1L385.7 112.1L387.8 110.2L391.0 107.4L393.2 105.2L394.6 101.2L395.3 97.8L393.8 97.8L392.5 101.6L390.2 105.2L387.4 108.1L385.3 110.9L383.2 111.9ZM317.6 132.8L318.2 130.4L320.4 128.2L322.1 128.9L325.1 128.7L328.2 128.4L329.7 128.9L329.7 129.8L327.2 129.8L324.0 129.8L320.8 130.1L319.3 131.9L318.9 133.7ZM289.3 129.8L290.6 128.2L292.9 128.9L292.1 130.1L290.2 130.7ZM285.0 135.5L285.5 132.8L286.5 131.0L287.4 131.9L286.5 134.0L285.9 136.1ZM323.4 141.4L325.1 140.4L327.8 140.7L326.8 142.0L324.6 142.1ZM227.2 81.1L230.4 79.8L231.2 77.6L231.0 75.4L227.2 73.2L225.0 75.9L225.3 78.1L227.0 79.8ZM236.5 76.7L238.4 75.0L237.8 71.8L235.7 68.6L234.4 70.5L235.0 74.1ZM187.6 85.2L189.3 83.6L191.0 84.4L190.1 86.5L188.4 87.3ZM191.2 89.7L192.3 88.1L192.9 86.1L192.1 87.3ZM218.7 85.2L220.1 84.8L220.6 87.7L219.7 89.3L219.1 87.3ZM257.2 153.1L258.2 153.1L258.9 155.5L257.8 155.8L257.4 154.5ZM251.4 151.8L253.3 151.1L253.8 152.3L252.3 152.7ZM257.0 146.5L258.0 147.2L258.2 147.8L257.4 147.3ZM241.6 86.5L243.3 85.2L244.2 87.7L242.7 88.5ZM381.9 212.6L383.6 214.2L382.9 214.6L381.7 213.3ZM442.1 133.1L443.8 132.8L443.6 134.9L442.3 134.6ZM373.4 156.3L375.3 155.8L375.5 157.1L373.8 157.1ZM372.9 -2.0L380.4 -0.4L386.8 -2.8L380.4 -4.4ZM374.6 112.6L375.5 112.9L375.3 116.3L374.6 116.0ZM357.6 116.3L359.7 116.3L359.5 117.6L357.8 117.6ZM338.5 123.8L341.7 124.5L341.2 125.1L338.9 124.8ZM334.2 129.8L335.7 130.1L335.3 131.0L334.0 130.7ZM257.0 117.3L259.1 114.6L259.5 114.6L257.6 117.6ZM264.4 104.1L266.1 99.7L266.7 99.7L265.5 104.1L265.0 105.9ZM250.8 125.7L253.1 123.5L252.7 125.1ZM231.2 188.6L230.6 190.9L228.2 193.2L229.1 192.7L231.0 190.9ZM218.7 279.9L222.7 276.8L222.5 277.7L219.5 280.2ZM221.8 259.6L223.1 259.6L222.7 261.3L221.8 260.9ZM160.6 224.1L161.6 226.3L161.4 227.6L160.8 226.5L159.3 224.6ZM12.2 274.4L13.7 275.0L14.8 276.6L13.1 275.7ZM219.3 35.1L221.6 35.7L220.4 36.9ZM220.4 75.4L222.5 72.8L223.3 74.1L221.4 76.3ZM9.0 48.1L12.2 48.7L12.5 51.3L10.1 51.9L8.0 50.3ZM8.4 56.5L11.2 57.0L11.0 59.0L8.8 59.0Z" fill="#aad3df"/>
<path d="M156.5 161.3L157.6 165.5L158.6 168.5L153.5 171.8L149.5 174.7L142.7 177.4L142.7 180.8M142.7 179.8L133.1 179.8M142.7 180.8L142.7 183.9L135.7 183.9L135.7 189.7L133.5 190.9L133.3 194.8L125.0 194.8M142.7 180.8L151.0 186.2L163.8 195.2L168.0 198.2L168.2 200.0L170.2 199.7L170.1 205.6L168.6 208.0L163.3 208.9L161.6 208.9M170.2 199.7L173.5 198.9L177.2 195.7L186.7 189.7M186.7 189.7L182.5 187.4L181.2 183.4L182.3 179.1L181.4 173.7L183.1 170.0L185.7 167.7L185.9 166.2M181.4 173.7L180.4 169.0L177.2 164.7L178.9 161.6L179.5 156.6M214.4 170.3L214.4 193.2L214.4 197.7L212.3 197.7L212.3 198.9L195.2 190.0L193.1 190.9L191.4 191.8L186.7 189.7M214.4 193.2L239.7 193.2M151.0 186.2L147.4 186.2L149.5 207.8L141.0 208.0L136.7 207.6L135.2 209.3L132.5 206.3L130.3 205.4L126.1 206.7M168.9 216.1L169.7 212.2L176.1 213.3L181.4 213.7L188.9 212.2L190.1 211.8L194.2 204.7L195.0 196.8L193.1 190.9M212.3 198.9L212.3 207.4L209.1 211.1L208.0 214.2L209.9 217.9L207.4 218.7L201.6 222.0L194.2 225.2L191.0 219.8L193.1 217.6L192.1 213.5L190.1 211.8M191.4 214.6L189.3 219.8L186.7 225.2L183.5 226.3L180.4 229.5L179.3 231.4M209.9 217.9L212.3 222.6L214.4 219.2L220.8 220.9L225.0 219.8L230.4 215.5L231.8 218.7L233.6 220.9L234.2 218.5L235.7 215.5L238.2 213.3L238.9 210.4L239.9 204.5L243.1 202.2M238.9 210.4L243.1 210.0L246.3 210.0L251.4 214.4M252.7 217.2L252.3 217.9L253.8 220.9L257.0 222.6L261.2 224.1L263.3 224.1L257.0 230.5L250.6 232.3L248.4 232.9L245.3 233.7L242.1 233.5L237.8 231.6L235.7 229.5L233.6 232.3L227.2 233.3L226.7 233.7M248.4 232.9L248.4 242.9L249.5 244.8M233.6 220.9L231.4 224.1L234.6 227.3L236.7 229.7L235.7 229.5M233.6 232.3L235.7 237.6L233.6 240.8L233.3 243.3L241.2 247.6L241.4 248.7L244.6 251.2M212.3 222.6L219.5 230.3L214.4 230.8L209.1 232.5L203.8 231.8L200.8 233.7L199.5 236.9L198.9 242.3L195.7 245.5L193.8 250.4L191.8 251.6L189.1 251.0L187.2 253.6M219.5 230.3L226.7 233.7L227.8 236.7L224.8 240.1L224.2 244.2L226.7 243.3L233.3 243.3M226.7 243.3L226.1 246.3L226.7 248.2L223.8 250.6M194.2 225.2L192.1 228.4L192.1 230.5L195.2 236.5L195.7 237.6L200.8 233.7M182.1 236.3L189.5 236.5L195.7 237.6M184.8 249.5L186.3 247.6L187.8 246.1L191.8 246.3L192.1 242.5L190.8 240.8L191.6 238.2L189.5 236.5L185.2 236.5L185.2 239.1L182.1 239.1M187.2 253.6L188.9 253.8L196.5 253.8L197.4 257.2L202.7 256.1L204.8 256.8L207.6 256.8L207.6 260.4L208.0 264.8L212.3 264.8L212.3 269.1L208.0 269.1L208.0 276.1L211.0 279.3M186.3 278.6L189.9 277.9L191.0 278.8L200.6 278.8L211.0 279.3L214.8 279.7M212.3 264.8L215.0 265.4L218.7 266.9L221.6 268.0L222.9 270.0L224.6 270.0L224.6 267.4L221.6 266.5L222.1 261.1L222.7 259.4L226.5 258.7L231.2 261.3L233.6 261.5M235.5 265.8L242.1 265.4L247.2 263.7M214.8 279.7L218.7 280.2L222.7 275.7L225.9 274.8L225.9 273.5L231.4 271.3L230.8 270.4L231.4 268.0L232.1 264.3L231.2 261.3M225.9 274.8L231.0 277.3L231.4 280.2L230.8 285.8L227.8 290.1L229.3 295.0L229.3 298.5L231.2 300.7M214.8 279.7L216.5 282.4L220.1 285.8L223.8 289.7L227.8 290.1M214.8 279.7L205.9 280.8L205.9 289.2L203.8 289.2L203.8 296.2L203.8 304.3M203.8 295.7L208.0 299.7L214.4 297.8L218.7 292.9L223.8 289.7M235.0 272.0L237.6 273.3L236.3 277.9L234.2 276.8L234.4 273.5M135.2 209.3L136.9 214.6L142.0 214.6L144.2 219.4L149.5 218.9L155.2 220.9L154.6 230.3M155.2 217.6L161.2 217.6L162.5 223.0L163.8 228.2M144.2 219.4L143.5 225.0L145.2 231.8M143.5 225.0L141.2 223.3L139.3 223.0L136.7 226.5M139.3 223.0L138.6 220.0L134.6 220.0L132.9 222.0M136.9 214.6L132.0 214.2L132.0 216.1L129.3 217.6M132.0 214.2L125.7 214.8M125.4 212.0L129.3 211.5L131.8 212.4L129.3 212.9L125.4 213.1M166.9 227.6L167.2 222.0L168.9 216.1L166.3 215.7L163.1 217.6L164.6 222.0L164.6 228.0M149.5 218.9L151.6 214.0L156.9 210.7L161.6 208.9L163.3 212.4L166.3 215.7M234.0 171.0L235.5 175.5M235.6 175.5L236.7 170.5L237.0 167.5L239.5 168.5L243.8 165.7L244.6 168.8M235.6 175.7L237.8 176.2L241.0 174.2L242.1 173.0L239.9 170.5L244.2 169.3L244.6 168.8L250.6 171.5L256.3 176.2L260.2 176.4L262.3 177.9L264.4 177.9M235.9 166.5L237.6 166.0L239.1 163.7L237.6 162.5M243.8 165.7L248.4 163.2L249.1 157.9L251.4 156.1M237.8 159.0L239.3 156.9L242.1 156.9L246.3 156.9L251.4 156.1L256.5 155.8M256.5 155.8L259.1 159.5L258.0 162.9L259.5 166.7L262.9 169.8L263.3 173.0L264.6 174.2M260.2 176.4L261.2 174.2L263.3 174.2M252.3 205.8L253.1 203.6L255.9 203.6L261.2 204.5L265.5 200.9L271.9 200.0L278.2 197.7L279.7 193.2L278.7 191.6M271.9 200.0L274.2 205.3M278.7 191.6L273.1 191.1L271.0 188.1M278.7 191.6L279.9 188.1L281.2 186.5M256.5 155.8L255.3 152.6L254.8 149.8L256.5 149.0L254.2 147.9L253.8 145.1L251.6 144.0L249.5 144.0M216.5 146.2L217.4 143.4L220.8 142.5M246.3 138.5L251.6 139.1L255.9 140.5L259.9 142.8L262.9 144.8L264.6 143.0M253.8 145.1L257.0 144.5L260.2 145.1L259.9 142.8M257.0 144.5L258.2 145.9L258.9 148.7L260.2 151.2M256.5 149.0L260.2 151.2L263.3 149.0L264.0 149.8L265.3 152.6M275.9 155.4L280.4 153.4L283.1 153.1L287.4 155.0L291.4 157.4L291.2 160.8L289.9 165.0L290.8 170.5L292.7 171.8L290.8 174.6L294.8 178.4L295.9 182.0L292.3 185.8M290.8 174.6L297.4 175.7L302.3 174.5L302.9 171.8L308.7 169.5L309.1 166.7L310.8 165.7L312.5 163.9L313.6 160.6L313.6 157.9L318.2 156.6L320.6 155.8M291.2 160.8L295.3 160.3L298.5 158.2L302.7 155.3L305.5 155.8L308.7 156.1L310.6 153.9L313.4 153.9L313.6 157.1L317.2 155.3L320.6 155.8M306.3 189.3L312.3 187.6L310.2 182.4L311.0 179.1L316.3 174.2L319.9 171.5L319.7 167.2L318.7 166.2L318.7 162.4L325.1 160.3L326.8 160.3L330.4 168.0L328.9 171.0L333.6 173.7L340.0 176.9L344.2 179.1L348.7 179.3M333.6 173.7L331.7 177.2L335.7 179.3L340.0 180.5L343.8 182.4L348.7 182.9L348.7 179.3L350.4 180.8L352.3 178.6L356.1 179.6L357.2 181.7L352.3 182.2L350.4 180.8M356.1 179.6L361.2 176.7L365.5 175.7L368.3 178.6L363.8 182.2L362.5 185.8L359.7 188.6L360.0 190.9L358.3 193.2L358.3 194.8L357.6 196.2M348.7 182.9L352.3 183.9L352.3 185.5L357.0 185.8L357.8 186.5L355.3 188.3L355.3 190.4L356.1 190.9L357.6 189.3L358.3 193.2M348.7 182.9L349.3 185.1L348.5 186.9L350.2 188.6L350.4 193.2M368.3 178.6L371.2 180.3L371.2 184.1L368.7 188.6L371.7 190.4L372.9 193.2L374.2 194.3L376.6 195.0L374.2 196.8L371.9 198.2L369.3 200.9L368.5 201.1L371.0 206.5L370.2 208.9L372.3 213.3L371.9 215.9L371.4 219.8M374.2 196.8L375.3 198.9L376.6 198.9L376.3 203.4L378.5 201.8L381.2 201.4L384.0 203.4L384.2 205.8L385.9 207.6L385.7 210.0L385.1 210.4L380.4 210.7L379.3 212.0L380.2 216.1M378.5 192.3L380.4 195.5L383.8 196.8L382.3 199.1L385.1 200.9L390.0 206.3L390.0 209.6L390.2 210.2L390.0 214.8L386.3 216.3L386.8 217.6L383.4 218.9M385.1 210.4L386.8 211.1L390.2 210.2M376.6 195.0L377.8 195.0L378.5 192.3L382.3 191.8L385.5 190.2L388.3 191.3L388.3 193.2L391.0 194.3M374.2 227.3L376.3 229.1L378.5 228.0M394.4 236.9L395.3 239.1L398.5 239.1L400.6 238.0L404.9 238.0L407.0 234.8L407.2 232.3L411.5 232.3M461.2 246.7L461.2 260.6M427.0 260.4L427.4 261.3M265.5 129.2L261.2 124.5L260.6 121.9L261.2 118.3L264.4 118.0L265.0 116.0L269.3 112.2L275.0 113.6L278.2 115.6L283.6 114.6L286.1 114.6L291.0 115.3L292.1 113.3L288.9 111.2L291.0 107.7L291.4 104.5L299.5 102.7L307.0 100.5L312.3 103.4L317.6 104.1L324.0 103.4L327.0 106.6L331.4 115.3L338.9 114.6L342.5 119.3L347.0 120.9M347.0 120.9L344.2 122.9L343.6 127.0L337.8 127.0L336.3 132.2L331.9 133.7L333.1 139.1L331.9 142.0L327.2 145.4L322.9 147.1L318.2 148.7L317.8 149.6L320.8 152.6L320.6 155.8M331.9 142.0L329.3 140.2L322.3 139.7L318.7 139.1L317.6 141.1L312.3 140.8L312.1 141.7L308.0 144.3L305.9 145.4L303.1 144.8L301.6 139.7L291.0 135.5L285.9 131.9L280.4 133.7L280.4 144.5L282.5 144.5L285.7 140.5L288.9 142.0L292.9 145.1L294.0 148.2L297.8 151.2L302.7 153.7L302.7 155.3M280.4 144.5L276.1 141.7L272.9 143.4M305.5 155.8L306.3 151.2L305.3 149.3L308.7 147.6L311.2 145.7L312.1 141.7M309.1 149.3L313.4 149.6L317.8 149.6M347.0 120.9L352.1 118.6L357.6 115.3L362.5 118.0L369.7 118.0L370.4 112.9L373.8 111.9L378.7 113.6L378.9 116.0L384.6 116.6L392.3 120.3L397.4 120.3L401.7 119.3L404.4 117.0L409.5 118.6M347.0 120.9L348.5 122.5L352.7 124.8L354.8 128.9L354.8 133.1L360.2 134.0L364.2 135.8L366.3 140.5L374.0 140.8L377.8 141.1L384.6 143.7L390.0 141.4L396.1 140.5L399.3 137.6L399.3 133.7L402.9 134.3L409.3 129.8L412.3 128.5L416.3 128.5L411.9 125.7L407.2 124.8L408.0 121.9L409.5 118.6M409.5 118.6L411.9 119.6L415.1 117.0L414.9 116.0L418.3 109.1L416.6 108.8L418.0 106.6L424.2 105.9L428.5 107.7L432.5 117.3L439.1 121.6L439.8 125.4L443.2 125.4L448.1 123.2L444.4 133.4L441.9 132.8L440.0 134.3L440.4 138.2L439.1 141.4L437.2 141.4L433.6 142.5L431.2 143.1L425.7 148.2M429.5 154.5L431.5 152.8L434.4 152.0M142.3 142.8L143.8 142.3L147.2 142.8L148.0 143.7L146.5 145.4L146.3 149.0L145.2 149.3L146.3 153.1L145.5 155.8M157.4 138.5L162.7 140.5L168.0 141.4M166.5 114.3L170.1 118.0L173.5 119.6L174.8 119.6L178.6 121.2L177.4 125.7L174.0 130.1L176.1 131.0L175.7 133.4L176.1 136.1L177.2 137.3M176.1 131.0L179.3 130.1L180.4 131.3L183.5 128.2L181.6 126.0L177.4 125.7M183.5 128.2L187.2 127.6L190.4 129.2L190.1 131.9M181.6 126.0L188.9 126.0L188.7 123.8L190.6 121.9L186.9 117.0L191.6 114.6L193.1 114.6L192.3 109.1L191.4 104.5M176.5 106.6L176.1 110.5L174.0 111.9L174.0 115.3L174.8 119.6M168.4 113.3L171.8 113.3L174.0 115.3M179.5 100.8L181.4 101.2M193.1 114.6L197.2 117.0L201.2 119.6L209.3 120.9M190.6 121.9L193.1 121.2L197.4 122.5L201.2 119.6M197.4 122.5L197.4 124.5L195.5 127.9L190.4 129.2M197.4 124.5L201.2 125.1L204.8 123.2L208.2 123.2M208.2 123.2L209.3 120.9L212.3 116.0L211.4 112.9L211.4 109.1L212.1 104.5L211.2 104.1M202.9 102.5L209.7 102.9L211.2 104.1L216.1 103.4L217.8 97.8L221.2 95.9M206.0 96.3L214.4 95.9L217.8 97.8M212.9 89.3L219.5 90.9M221.2 95.9L219.5 90.9L219.7 85.2L220.8 82.7M221.2 95.9L227.0 98.2L226.7 101.2L230.8 106.3L228.2 107.0L228.9 110.9M211.4 112.9L218.7 112.6L226.3 113.6L228.9 110.9L233.6 110.2L236.7 116.6L242.1 118.3L246.3 119.3L245.9 124.5L242.5 127.3M208.2 123.2L209.9 124.5L214.2 125.4L217.8 123.5L220.8 123.5L223.3 124.8L225.3 129.5L221.2 132.2L224.2 133.1M217.8 123.5L221.2 128.5L221.2 132.2M209.9 124.5L205.9 130.1L204.4 130.4M195.5 127.9L196.5 129.2L201.2 131.0L204.4 130.4L206.7 134.3L209.5 136.1L214.4 137.6L218.7 136.4L222.1 137.6M209.5 136.1L208.9 141.7L210.1 144.5L213.3 144.0L216.5 144.5L217.4 143.4M203.8 149.0L205.9 145.7L210.1 144.5M202.5 142.8L205.0 142.5L205.9 145.7M201.2 131.0L201.6 134.0L202.9 136.7L202.1 138.2L204.4 140.2L205.0 142.5L208.9 141.7M201.6 134.0L195.2 133.1L194.8 134.6L198.7 139.7L200.6 141.1M190.1 132.2L194.6 131.3L196.5 129.2M185.0 84.8L186.7 80.6L187.4 76.3L187.2 67.2L191.0 60.0L193.1 51.3L196.1 44.3L199.9 38.6L204.8 35.1M212.7 53.4L211.6 44.3L204.8 35.1L215.9 35.7L217.6 30.2L220.8 29.6L222.9 35.7L226.7 30.8M220.4 78.5L228.2 67.7L225.0 62.5L224.6 52.4L222.9 43.2L221.8 38.6L226.7 30.8M145.7 100.5L144.4 103.4L147.8 103.8M18.6 134.0L16.9 131.6L16.9 127.3L13.9 126.4L11.6 130.1L10.5 132.8L9.0 133.7L2.2 133.7L-1.6 136.1M8.6 202.9L8.4 200.9L8.6 198.2M9.5 215.9L6.9 217.4L5.9 221.5L7.1 223.3L8.0 226.3L12.0 226.3L17.6 228.0L16.9 232.7L18.0 236.9L18.8 238.6L21.8 239.5L26.3 236.5L25.0 232.7L31.4 231.6L32.0 230.1L30.5 228.6L33.5 223.0M32.0 230.1L33.9 231.8L33.5 236.9L36.1 238.4L39.9 236.9L45.2 236.3L49.3 236.5L51.4 232.0M39.9 236.9L39.3 229.5L39.9 228.4M45.2 236.3L46.3 228.8M18.8 238.6L12.7 238.9L13.5 243.3L12.2 250.1L8.0 246.5L3.7 243.3L1.0 241.4L-1.6 240.6M12.2 250.1L5.9 250.8L4.4 256.8L6.5 261.3L11.0 261.5L11.0 264.8L13.1 264.6L15.0 268.0L14.4 273.1L13.1 278.6L13.3 279.0L11.6 280.8M13.1 264.6L16.5 264.1L22.0 261.9L22.2 265.8L27.1 268.4L32.5 270.9L33.1 276.1L36.9 276.4L37.4 279.0L38.6 280.2L37.4 284.2L37.4 285.1L38.0 289.4L42.7 289.9L43.3 293.8L45.6 294.1L45.0 297.6M13.3 279.0L15.4 283.5L16.1 288.1L18.2 291.1L20.8 288.8L24.4 291.1L27.8 289.7L28.6 285.8L29.7 283.7L35.4 283.1L37.4 285.1M27.8 289.7L33.5 293.8L38.6 297.6L36.5 301.6L42.0 301.6L45.0 297.6L46.7 300.7L47.4 302.1M18.2 291.1L15.6 295.0L15.9 300.9L13.3 304.5M1.0 241.4L0.3 244.4L-4.8 248.2" fill="none" stroke="#d6c6da" stroke-width=".55"/>
<g>
<circle cx="-2.7" cy="268.9" r="10.4" fill="#8c8c8c" fill-opacity=".8" stroke="#8c8c8c" stroke-opacity=".42" stroke-width="2.4"/>
<circle cx="3.5" cy="231.2" r="10.4" fill="#8c8c8c" fill-opacity=".8" stroke="#8c8c8c" stroke-opacity=".42" stroke-width="2.4"/>
<circle cx="14.6" cy="215.3" r="10.4" fill="#8c8c8c" fill-opacity=".8" stroke="#8c8c8c" stroke-opacity=".42" stroke-width="2.4"/>
<circle cx="132.0" cy="220.9" r="10.4" fill="#8c8c8c" fill-opacity=".8" stroke="#8c8c8c" stroke-opacity=".42" stroke-width="2.4"/>
<circle cx="144.2" cy="214.1" r="10.4" fill="#8c8c8c" fill-opacity=".8" stroke="#8c8c8c" stroke-opacity=".42" stroke-width="2.4"/>
<circle cx="152.7" cy="229.8" r="10.4" fill="#8c8c8c" fill-opacity=".8" stroke="#8c8c8c" stroke-opacity=".42" stroke-width="2.4"/>
<circle cx="160.8" cy="229.4" r="10.4" fill="#8c8c8c" fill-opacity=".8" stroke="#8c8c8c" stroke-opacity=".42" stroke-width="2.4"/>
<circle cx="193.2" cy="215.3" r="10.4" fill="#ff0000" fill-opacity=".8" stroke="#ff0000" stroke-opacity=".42" stroke-width="2.4"/>
<circle cx="177.2" cy="221.9" r="10.4" fill="#ffff00" fill-opacity=".8" stroke="#ffff00" stroke-opacity=".42" stroke-width="2.4"/>
<circle cx="169.1" cy="228.6" r="10.4" fill="#00e400" fill-opacity=".8" stroke="#00e400" stroke-opacity=".42" stroke-width="2.4"/>
<circle cx="181.3" cy="240.3" r="10.4" fill="#ffff00" fill-opacity=".8" stroke="#ffff00" stroke-opacity=".42" stroke-width="2.4"/>
<circle cx="167.7" cy="157.0" r="10.4" fill="#ffff00" fill-opacity=".8" stroke="#ffff00" stroke-opacity=".42" stroke-width="2.4"/>
<circle cx="207.4" cy="139.4" r="10.4" fill="#ff0000" fill-opacity=".8" stroke="#ff0000" stroke-opacity=".42" stroke-width="2.4"/>
<circle cx="206.5" cy="141.2" r="10.4" fill="#ff7e00" fill-opacity=".8" stroke="#ff7e00" stroke-opacity=".42" stroke-width="2.4"/>
<circle cx="198.3" cy="136.1" r="10.4" fill="#ff7e00" fill-opacity=".8" stroke="#ff7e00" stroke-opacity=".42" stroke-width="2.4"/>
<circle cx="230.5" cy="240.5" r="10.4" fill="#ff7e00" fill-opacity=".8" stroke="#ff7e00" stroke-opacity=".42" stroke-width="2.4"/>
<circle cx="239.5" cy="244.0" r="10.4" fill="#00e400" fill-opacity=".8" stroke="#00e400" stroke-opacity=".42" stroke-width="2.4"/>
<circle cx="243.7" cy="222.0" r="10.4" fill="#ffff00" fill-opacity=".8" stroke="#ffff00" stroke-opacity=".42" stroke-width="2.4"/>
<circle cx="230.4" cy="207.6" r="10.4" fill="#ffff00" fill-opacity=".8" stroke="#ffff00" stroke-opacity=".42" stroke-width="2.4"/>
<circle cx="262.3" cy="283.3" r="10.4" fill="#00e400" fill-opacity=".8" stroke="#00e400" stroke-opacity=".42" stroke-width="2.4"/>
<circle cx="244.6" cy="194.3" r="10.4" fill="#ff7e00" fill-opacity=".8" stroke="#ff7e00" stroke-opacity=".42" stroke-width="2.4"/>
<circle cx="237.6" cy="169.4" r="10.4" fill="#8c8c8c" fill-opacity=".8" stroke="#8c8c8c" stroke-opacity=".42" stroke-width="2.4"/>
<circle cx="278.9" cy="185.8" r="10.4" fill="#ffff00" fill-opacity=".8" stroke="#ffff00" stroke-opacity=".42" stroke-width="2.4"/>
<circle cx="270.4" cy="183.4" r="10.4" fill="#8c8c8c" fill-opacity=".8" stroke="#8c8c8c" stroke-opacity=".42" stroke-width="2.4"/>
<circle cx="260.6" cy="186.9" r="10.4" fill="#ffff00" fill-opacity=".8" stroke="#ffff00" stroke-opacity=".42" stroke-width="2.4"/>
<circle cx="255.7" cy="166.0" r="10.4" fill="#ff0000" fill-opacity=".8" stroke="#ff0000" stroke-opacity=".42" stroke-width="2.4"/>
<circle cx="263.3" cy="175.8" r="10.4" fill="#ff7e00" fill-opacity=".8" stroke="#ff7e00" stroke-opacity=".42" stroke-width="2.4"/>
<circle cx="285.5" cy="153.8" r="10.4" fill="#ffff00" fill-opacity=".8" stroke="#ffff00" stroke-opacity=".42" stroke-width="2.4"/>
<circle cx="313.2" cy="114.1" r="10.4" fill="#00e400" fill-opacity=".8" stroke="#00e400" stroke-opacity=".42" stroke-width="2.4"/>
<circle cx="303.8" cy="186.6" r="10.4" fill="#8c8c8c" fill-opacity=".8" stroke="#8c8c8c" stroke-opacity=".42" stroke-width="2.4"/>
<circle cx="331.1" cy="226.4" r="10.4" fill="#8c8c8c" fill-opacity=".8" stroke="#8c8c8c" stroke-opacity=".42" stroke-width="2.4"/>
<circle cx="316.3" cy="199.8" r="10.4" fill="#ff0000" fill-opacity=".8" stroke="#ff0000" stroke-opacity=".42" stroke-width="2.4"/>
<circle cx="328.2" cy="203.6" r="10.4" fill="#ff7e00" fill-opacity=".8" stroke="#ff7e00" stroke-opacity=".42" stroke-width="2.4"/>
<circle cx="332.0" cy="213.1" r="10.4" fill="#ff0000" fill-opacity=".8" stroke="#ff0000" stroke-opacity=".42" stroke-width="2.4"/>
<circle cx="353.6" cy="189.0" r="10.4" fill="#ff0000" fill-opacity=".8" stroke="#ff0000" stroke-opacity=".42" stroke-width="2.4"/>
<circle cx="349.2" cy="191.9" r="10.4" fill="#8c8c8c" fill-opacity=".8" stroke="#8c8c8c" stroke-opacity=".42" stroke-width="2.4"/>
<circle cx="342.7" cy="179.8" r="10.4" fill="#ff7e00" fill-opacity=".8" stroke="#ff7e00" stroke-opacity=".42" stroke-width="2.4"/>
<circle cx="325.5" cy="177.6" r="10.4" fill="#ff0000" fill-opacity=".8" stroke="#ff0000" stroke-opacity=".42" stroke-width="2.4"/>
<circle cx="316.7" cy="165.0" r="10.4" fill="#ff0000" fill-opacity=".8" stroke="#ff0000" stroke-opacity=".42" stroke-width="2.4"/>
<circle cx="319.3" cy="170.5" r="10.4" fill="#7e0023" fill-opacity=".8" stroke="#7e0023" stroke-opacity=".42" stroke-width="2.4"/>
<circle cx="308.6" cy="144.5" r="10.4" fill="#ff7e00" fill-opacity=".8" stroke="#ff7e00" stroke-opacity=".42" stroke-width="2.4"/>
<circle cx="307.6" cy="152.2" r="10.4" fill="#ff0000" fill-opacity=".8" stroke="#ff0000" stroke-opacity=".42" stroke-width="2.4"/>
<circle cx="319.9" cy="140.0" r="10.4" fill="#99004c" fill-opacity=".8" stroke="#99004c" stroke-opacity=".42" stroke-width="2.4"/>
<circle cx="324.8" cy="138.9" r="10.4" fill="#ff7e00" fill-opacity=".8" stroke="#ff7e00" stroke-opacity=".42" stroke-width="2.4"/>
<circle cx="365.9" cy="204.9" r="10.4" fill="#ffff00" fill-opacity=".8" stroke="#ffff00" stroke-opacity=".42" stroke-width="2.4"/>
<circle cx="386.4" cy="195.4" r="10.4" fill="#ff0000" fill-opacity=".8" stroke="#ff0000" stroke-opacity=".42" stroke-width="2.4"/>
<circle cx="379.5" cy="202.3" r="10.4" fill="#ffff00" fill-opacity=".8" stroke="#ffff00" stroke-opacity=".42" stroke-width="2.4"/>
<circle cx="402.3" cy="190.7" r="10.4" fill="#8c8c8c" fill-opacity=".8" stroke="#8c8c8c" stroke-opacity=".42" stroke-width="2.4"/>
<circle cx="388.3" cy="218.1" r="10.4" fill="#ffff00" fill-opacity=".8" stroke="#ffff00" stroke-opacity=".42" stroke-width="2.4"/>
<circle cx="388.5" cy="254.4" r="10.4" fill="#ffff00" fill-opacity=".8" stroke="#ffff00" stroke-opacity=".42" stroke-width="2.4"/>
<circle cx="419.8" cy="171.3" r="10.4" fill="#ff7e00" fill-opacity=".8" stroke="#ff7e00" stroke-opacity=".42" stroke-width="2.4"/>
<circle cx="408.9" cy="148.5" r="10.4" fill="#00e400" fill-opacity=".8" stroke="#00e400" stroke-opacity=".42" stroke-width="2.4"/>
<circle cx="423.8" cy="143.1" r="10.4" fill="#ffff00" fill-opacity=".8" stroke="#ffff00" stroke-opacity=".42" stroke-width="2.4"/>
<circle cx="388.7" cy="124.8" r="10.4" fill="#ffff00" fill-opacity=".8" stroke="#ffff00" stroke-opacity=".42" stroke-width="2.4"/>
<text x="-2.7" y="271.6" class="ml">N/A</text>
<text x="3.5" y="233.9" class="ml">N/A</text>
<text x="14.6" y="218.0" class="ml">N/A</text>
<text x="132.0" y="223.6" class="ml">N/A</text>
<text x="144.2" y="216.8" class="ml">N/A</text>
<text x="152.7" y="232.5" class="ml">N/A</text>
<text x="160.8" y="232.1" class="ml">N/A</text>
<text x="193.2" y="218.0" class="ml">190</text>
<text x="181.3" y="243.0" class="ml">64</text>
<text x="169.1" y="231.3" class="ml">101</text>
<text x="167.7" y="159.7" class="ml">79</text>
<text x="177.2" y="224.6" class="ml">52</text>
<text x="207.4" y="142.1" class="ml">153</text>
<text x="206.5" y="143.9" class="ml">122</text>
<text x="198.3" y="138.8" class="ml">111</text>
<text x="230.5" y="243.2" class="ml">106</text>
<text x="239.5" y="246.7" class="ml">38</text>
<text x="243.7" y="224.7" class="ml">73</text>
<text x="230.4" y="210.3" class="ml">80</text>
<text x="262.3" y="286.0" class="ml">22</text>
<text x="244.6" y="197.0" class="ml">128</text>
<text x="237.6" y="172.1" class="ml">N/A</text>
<text x="278.9" y="188.5" class="ml">82</text>
<text x="270.4" y="186.1" class="ml">N/A</text>
<text x="260.6" y="189.6" class="ml">72</text>
<text x="255.7" y="168.7" class="ml">155</text>
<text x="263.3" y="178.5" class="ml">106</text>
<text x="285.5" y="156.5" class="ml">70</text>
<text x="313.2" y="116.8" class="ml">40</text>
<text x="303.8" y="189.3" class="ml">N/A</text>
<text x="331.1" y="229.1" class="ml">N/A</text>
<text x="316.3" y="202.5" class="ml">171</text>
<text x="328.2" y="206.3" class="ml">144</text>
<text x="332.0" y="215.8" class="ml">166</text>
<text x="353.6" y="191.7" class="ml">164</text>
<text x="349.2" y="194.6" class="ml">N/A</text>
<text x="342.7" y="182.5" class="ml">103</text>
<text x="319.3" y="173.2" class="ml">404</text>
<text x="325.5" y="180.3" class="ml">181</text>
<text x="316.7" y="167.7" class="ml">163</text>
<text x="308.6" y="147.2" class="ml">117</text>
<text x="307.6" y="154.9" class="ml">177</text>
<text x="319.9" y="142.7" class="ml">228</text>
<text x="324.8" y="141.6" class="ml">142</text>
<text x="365.9" y="207.6" class="ml">61</text>
<text x="386.4" y="198.1" class="ml">175</text>
<text x="379.5" y="205.0" class="ml">96</text>
<text x="402.3" y="193.4" class="ml">N/A</text>
<text x="388.3" y="220.8" class="ml">75</text>
<text x="388.5" y="257.1" class="ml">97</text>
<text x="419.8" y="174.0" class="ml">109</text>
<text x="408.9" y="151.2" class="ml">49</text>
<text x="423.8" y="145.8" class="ml">93</text>
<text x="388.7" y="127.5" class="ml">72</text>
</g>
</svg>
<!-- popup -->
<div class="abs" style="left:284px;top:18.8px;width:119px;height:103px;background:#fff;border-radius:8px;box-shadow:0 2px 8px rgba(0,0,0,.38)"></div>
<svg class="abs" style="left:311.5px;top:121.6px" width="16" height="9" viewBox="0 0 16 9"><path d="M0 0h16L8 7.6Z" fill="#fff"/></svg>
<div class="abs" style="left:284px;top:30.2px;width:119px;text-align:center;font-size:10.47px;line-height:12px;color:#333;white-space:nowrap">Bishkek</div>
<div class="abs" style="left:284px;top:42.7px;width:119px;text-align:center;font-size:10.47px;line-height:12px;color:#333;white-space:nowrap">2021-12-16 6:00 PM</div>
<div class="abs" style="left:284px;top:53.5px;width:119px;text-align:center;font-size:10.47px;line-height:12px;color:#333;white-space:nowrap">(LT)</div>
<div class="abs" style="left:295px;top:65px;width:96.9px;height:45.8px;background:#034a84"></div>
<div class="abs" style="left:296px;top:86.6px;width:60px;height:23.2px;background:#fff"></div>
<div class="abs" style="left:356px;top:86.6px;width:34.9px;height:23.2px;background:#99004c"></div>
<div class="abs" style="left:296px;top:69.3px;width:60px;text-align:center;font-size:10.47px;font-weight:bold;color:#fff;line-height:13px">Pollutant</div>
<div class="abs" style="left:356px;top:69.3px;width:34.9px;text-align:center;font-size:10.47px;font-weight:bold;color:#fff;line-height:13px">AQI</div>
<div class="abs" style="left:296px;top:91.8px;width:60px;text-align:center;font-size:10.47px;color:#444;line-height:13px">PM2.5</div>
<div class="abs" style="left:356px;top:91.8px;width:34.9px;text-align:center;font-size:10.47px;font-weight:bold;color:#fff;line-height:13px">228</div>
</div>

<div class="abs bar" style="top:1.7px">Select a City</div>
<div class="abs sel" style="top:30px">Bishkek<span class="x">×</span><span class="a"></span></div>
<div class="abs bar" style="top:73px">Select a Parameter</div>
<div class="abs sel" style="top:101.3px">PM2.5<span class="x">×</span><span class="a"></span></div>

<div id="info" class="abs"><b>Bishkek</b>
<svg class="abs" style="left:214px;top:19px" width="26" height="26" viewBox="0 0 26 26">
<rect width="26" height="26" rx="1.5" fill="#eeac3c"/>
<circle cx="6.8" cy="19.5" r="2.7" fill="#fff"/>
<path d="M4.200 11.200a10.800 10.800 0 0 1 10.800 10.8" fill="none" stroke="#fff" stroke-width="3.4"/>
<path d="M4.200 4.500a17.500 17.500 0 0 1 17.500 17.5" fill="none" stroke="#fff" stroke-width="3.4"/>
</svg>
</div>
<div id="note" class="abs">Note: Values above 500 are considered Beyond the AQI. Follow<br>recommendations for the Hazardous category. Additional<br>information on reducing exposure to extremely high levels of particle<br>pollution is available <b>here</b>.</div>

<div class="abs" style="left:4px;top:376px;width:793px;height:1px;background:#9a9a9a"></div>
<div class="abs tab" style="left:4px;width:79.5px;background:#fff;border:1px solid #8fa6bd;border-top:2px solid #034a84;border-bottom:1px solid #b5b5b5;color:#333;height:23px;line-height:24.5px">AQI</div>
<div class="abs tab" style="left:86px;width:124.5px">Concentration</div>
<div class="abs tab" style="left:213.5px;width:103px">Historical</div>
<div id="learn" class="abs">Learn more about how the Air Quality Index [AQI] is calculated from the EPA <b>here</b>.</div>

<div id="chart" class="abs">
<svg class="abs" style="left:0;top:0" width="595" height="231" viewBox="0 0 595 231">
<text x="297.5" y="18" text-anchor="middle" style='font:13.15px "DejaVu Sans","Liberation Sans",sans-serif;fill:#333'>Bishkek – PM2.5</text>
<text transform="translate(22 111.500) rotate(-90)" text-anchor="middle" style='font:8.9px "DejaVu Sans","Liberation Sans",sans-serif;fill:#111'>AQI</text>
<path d="M56.0 183.5H588.4" stroke="#e4e4e4" stroke-width="1"/>
<text x="45.0" y="186.0" class="yl">0</text>
<path d="M56.0 156.5H588.4" stroke="#e4e4e4" stroke-width="1"/>
<text x="45.0" y="159.0" class="yl">100</text>
<path d="M56.0 128.5H588.4" stroke="#e4e4e4" stroke-width="1"/>
<text x="45.0" y="131.0" class="yl">200</text>
<path d="M56.0 101.5H588.4" stroke="#e4e4e4" stroke-width="1"/>
<text x="45.0" y="104.0" class="yl">300</text>
<path d="M56.0 73.5H588.4" stroke="#e4e4e4" stroke-width="1"/>
<text x="45.0" y="76.0" class="yl">400</text>
<path d="M56.0 46.5H588.4" stroke="#e4e4e4" stroke-width="1"/>
<text x="45.0" y="49.0" class="yl">500</text>
<path d="M56.0 183.8H588.4" stroke="#c0d0e0" stroke-width="1"/>
<path d="M56.0 183.8v5" stroke="#c0d0e0" stroke-width="1"/>
<path d="M78.2 183.8v5" stroke="#c0d0e0" stroke-width="1"/>
<path d="M100.4 183.8v5" stroke="#c0d0e0" stroke-width="1"/>
<path d="M122.5 183.8v5" stroke="#c0d0e0" stroke-width="1"/>
<path d="M144.7 183.8v5" stroke="#c0d0e0" stroke-width="1"/>
<path d="M166.9 183.8v5" stroke="#c0d0e0" stroke-width="1"/>
<path d="M189.1 183.8v5" stroke="#c0d0e0" stroke-width="1"/>
<path d="M211.3 183.8v5" stroke="#c0d0e0" stroke-width="1"/>
<path d="M233.5 183.8v5" stroke="#c0d0e0" stroke-width="1"/>
<path d="M255.7 183.8v5" stroke="#c0d0e0" stroke-width="1"/>
<path d="M277.8 183.8v5" stroke="#c0d0e0" stroke-width="1"/>
<path d="M300.0 183.8v5" stroke="#c0d0e0" stroke-width="1"/>
<path d="M322.2 183.8v5" stroke="#c0d0e0" stroke-width="1"/>
<path d="M344.4 183.8v5" stroke="#c0d0e0" stroke-width="1"/>
<path d="M366.6 183.8v5" stroke="#c0d0e0" stroke-width="1"/>
<path d="M388.8 183.8v5" stroke="#c0d0e0" stroke-width="1"/>
<path d="M410.9 183.8v5" stroke="#c0d0e0" stroke-width="1"/>
<path d="M433.1 183.8v5" stroke="#c0d0e0" stroke-width="1"/>
<path d="M455.3 183.8v5" stroke="#c0d0e0" stroke-width="1"/>
<path d="M477.5 183.8v5" stroke="#c0d0e0" stroke-width="1"/>
<path d="M499.7 183.8v5" stroke="#c0d0e0" stroke-width="1"/>
<path d="M521.9 183.8v5" stroke="#c0d0e0" stroke-width="1"/>
<path d="M544.0 183.8v5" stroke="#c0d0e0" stroke-width="1"/>
<path d="M566.2 183.8v5" stroke="#c0d0e0" stroke-width="1"/>
<path d="M588.4 183.8v5" stroke="#c0d0e0" stroke-width="1"/>
<rect x="61.7" y="136.6" width="11.3" height="47.2" fill="#ff0000" stroke="#5a1010" stroke-width=".8"/>
<text transform="translate(68.6 195.8) rotate(-45)" class="xl">7 PM</text>
<rect x="83.9" y="139.3" width="11.3" height="44.5" fill="#ff0000" stroke="#5a1010" stroke-width=".8"/>
<text transform="translate(90.8 195.8) rotate(-45)" class="xl">8 PM</text>
<rect x="106.1" y="140.2" width="11.3" height="43.6" fill="#ff0000" stroke="#5a1010" stroke-width=".8"/>
<text transform="translate(113.0 195.8) rotate(-45)" class="xl">9 PM</text>
<rect x="128.2" y="139.3" width="11.3" height="44.5" fill="#ff0000" stroke="#5a1010" stroke-width=".8"/>
<text transform="translate(135.1 195.8) rotate(-45)" class="xl">10 PM</text>
<rect x="150.4" y="138.8" width="11.3" height="45.0" fill="#ff0000" stroke="#5a1010" stroke-width=".8"/>
<text transform="translate(157.3 195.8) rotate(-45)" class="xl">11 PM</text>
<rect x="172.6" y="140.2" width="11.3" height="43.6" fill="#ff0000" stroke="#5a1010" stroke-width=".8"/>
<text transform="translate(179.5 195.8) rotate(-45)" class="xl">2021 12 AM</text>
<rect x="194.8" y="140.7" width="11.3" height="43.1" fill="#ff0000" stroke="#5a1010" stroke-width=".8"/>
<text transform="translate(201.7 195.8) rotate(-45)" class="xl">1 AM</text>
<rect x="217.0" y="141.8" width="11.3" height="42.0" fill="#ff0000" stroke="#5a1010" stroke-width=".8"/>
<text transform="translate(223.9 195.8) rotate(-45)" class="xl">2 AM</text>
<rect x="239.2" y="143.2" width="11.3" height="40.6" fill="#ff7e00" stroke="#5a1010" stroke-width=".8"/>
<text transform="translate(246.1 195.8) rotate(-45)" class="xl">3 AM</text>
<rect x="261.3" y="142.6" width="11.3" height="41.2" fill="#ff7e00" stroke="#5a1010" stroke-width=".8"/>
<text transform="translate(268.2 195.8) rotate(-45)" class="xl">4 AM</text>
<rect x="283.5" y="138.0" width="11.3" height="45.8" fill="#ff0000" stroke="#5a1010" stroke-width=".8"/>
<text transform="translate(290.4 195.8) rotate(-45)" class="xl">5 AM</text>
<rect x="305.7" y="139.3" width="11.3" height="44.5" fill="#ff0000" stroke="#5a1010" stroke-width=".8"/>
<text transform="translate(312.6 195.8) rotate(-45)" class="xl">6 AM</text>
<rect x="327.9" y="141.3" width="11.3" height="42.5" fill="#ff0000" stroke="#5a1010" stroke-width=".8"/>
<text transform="translate(334.8 195.8) rotate(-45)" class="xl">7 AM</text>
<rect x="350.1" y="146.2" width="11.3" height="37.6" fill="#ff7e00" stroke="#5a1010" stroke-width=".8"/>
<text transform="translate(357.0 195.8) rotate(-45)" class="xl">8 AM</text>
<rect x="372.3" y="148.1" width="11.3" height="35.7" fill="#ff7e00" stroke="#5a1010" stroke-width=".8"/>
<text transform="translate(379.2 195.8) rotate(-45)" class="xl">9 AM</text>
<rect x="394.4" y="148.1" width="11.3" height="35.7" fill="#ff7e00" stroke="#5a1010" stroke-width=".8"/>
<text transform="translate(401.3 195.8) rotate(-45)" class="xl">10 AM</text>
<rect x="416.6" y="141.8" width="11.3" height="42.0" fill="#ff0000" stroke="#5a1010" stroke-width=".8"/>
<text transform="translate(423.5 195.8) rotate(-45)" class="xl">11 AM</text>
<rect x="438.8" y="140.2" width="11.3" height="43.6" fill="#ff0000" stroke="#5a1010" stroke-width=".8"/>
<text transform="translate(445.7 195.8) rotate(-45)" class="xl">12 PM</text>
<rect x="461.0" y="139.3" width="11.3" height="44.5" fill="#ff0000" stroke="#5a1010" stroke-width=".8"/>
<text transform="translate(467.9 195.8) rotate(-45)" class="xl">1 PM</text>
<rect x="483.2" y="138.0" width="11.3" height="45.8" fill="#ff0000" stroke="#5a1010" stroke-width=".8"/>
<text transform="translate(490.1 195.8) rotate(-45)" class="xl">2 PM</text>
<rect x="505.4" y="138.0" width="11.3" height="45.8" fill="#ff0000" stroke="#5a1010" stroke-width=".8"/>
<text transform="translate(512.3 195.8) rotate(-45)" class="xl">3 PM</text>
<rect x="527.5" y="134.1" width="11.3" height="49.7" fill="#ff0000" stroke="#5a1010" stroke-width=".8"/>
<text transform="translate(534.4 195.8) rotate(-45)" class="xl">4 PM</text>
<rect x="549.7" y="128.9" width="11.3" height="54.9" fill="#ff0000" stroke="#5a1010" stroke-width=".8"/>
<text transform="translate(556.6 195.8) rotate(-45)" class="xl">5 PM</text>
<rect x="571.9" y="121.2" width="11.3" height="62.6" fill="#99004c" stroke="#5a1010" stroke-width=".8"/>
<text transform="translate(578.8 195.8) rotate(-45)" class="xl">6 PM</text>
</svg>
</div>

<div id="cc" class="abs">
<div class="h">
<div class="ln" style="top:4px;font-size:11.2px;line-height:14px">Current Conditions</div>
<div class="ln" style="top:20.3px;font-size:9.4px;line-height:14px;letter-spacing:-.2px">observed at</div>
<div class="ln" style="top:35.8px;font-size:11.25px;line-height:14px">Dec 16, 2021 6:00 PM (LT)</div>
</div>
<div class="v">
<div class="ln" style="top:12.3px;line-height:18px">228 AQI</div>
<div class="ln" style="top:34.5px;line-height:18px">Very Unhealthy</div>
<div class="ln" style="top:55px;line-height:18px">PM2.5</div>
</div>
<div class="ln" style="top:148.7px;text-align:center;font-size:8.98px;font-weight:bold;line-height:14px;color:#333">Health Message</div>
<div class="ln" style="left:4.5px;top:169px;font-size:8.98px;line-height:15.75px;color:#333">AQI values between 201 and 300 trigger a<br>health alert, meaning everyone may<br>experience more serious health effects.</div>
</div>
<div class="abs" style="left:610px;top:643.5px;font-size:8.24px;line-height:12px;color:#6a6a6a;white-space:nowrap">Note: Values above 500 are considered Beyond</div>
</body>
</html>
